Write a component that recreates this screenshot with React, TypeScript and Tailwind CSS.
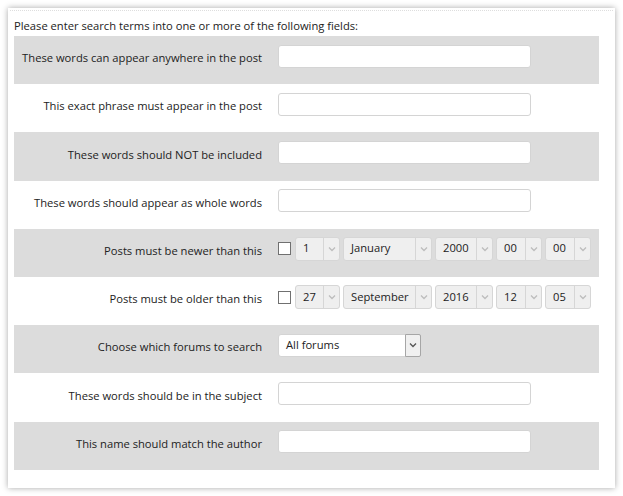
import React from 'react'

type Row = { label: string; kind: 'text' | 'newer' | 'older' | 'forums' }

const ROWS: Row[] = [
  { label: 'These words can appear anywhere in the post', kind: 'text' },
  { label: 'This exact phrase must appear in the post', kind: 'text' },
  { label: 'These words should NOT be included', kind: 'text' },
  { label: 'These words should appear as whole words', kind: 'text' },
  { label: 'Posts must be newer than this', kind: 'newer' },
  { label: 'Posts must be older than this', kind: 'older' },
  { label: 'Choose which forums to search', kind: 'forums' },
  { label: 'These words should be in the subject', kind: 'text' },
  { label: 'This name should match the author', kind: 'text' },
]

function Chevron({ className }: { className: string }) {
  return (
    <svg width="8" height="6" viewBox="0 0 8 6" className={className}>
      <path d="M1 1.5 L4 4.5 L7 1.5" fill="none" stroke="currentColor" strokeWidth="1.3" />
    </svg>
  )
}

function DateSelect({ value, w }: { value: string; w: string }) {
  return (
    <div className={`${w} h-[24px] flex items-stretch rounded-[3px] border border-[#d6d6d6] bg-[#efefef]`}>
      <div className="flex-1 flex items-center pl-[7px] text-[#222]">{value}</div>
      <div className="w-[16px] flex items-center justify-center border-l border-[#d6d6d6]">
        <Chevron className="text-[#bdbdbd]" />
      </div>
    </div>
  )
}

function DateFields({ vals }: { vals: string[] }) {
  return (
    <div className="flex items-center">
      <div className="w-[13px] h-[13px] border border-[#707070] bg-white mr-[4px]" />
      <div className="flex gap-[3px]">
        <DateSelect value={vals[0]} w="w-[45px]" />
        <DateSelect value={vals[1]} w="w-[89px]" />
        <DateSelect value={vals[2]} w="w-[58px]" />
        <DateSelect value={vals[3]} w="w-[46px]" />
        <DateSelect value={vals[4]} w="w-[46px]" />
      </div>
    </div>
  )
}

export default function App() {
  return (
    <div className="bg-white min-h-[496px] p-[8px]" style={{ fontFamily: '"Open Sans", "Liberation Sans", sans-serif' }}>
      <div className="w-[607px] h-[480px] bg-white shadow-[0_0_6px_rgba(0,0,0,0.35)] pt-[2px] pl-[6px] pr-[16px] text-[11.2px] text-[#333]">
        <div className="ml-[-4px] mr-[-14px] border-t border-dotted border-[#dedede]" />
        <div className="h-[25px] flex items-end pb-[1px] text-[#222]">
          Please enter search terms into one or more of the following fields:
        </div>
        <div className="flex flex-col">
          {ROWS.map((r, i) => (
            <div key={i} className={`h-[48.2px] pb-[8px] flex items-center ${i % 2 === 0 ? 'bg-[#dcdcdc]' : 'bg-white'}`}>
              <div className="w-[248px] pt-[5px] text-right text-[#222]">{r.label}</div>
              <div className="ml-[16px]">
                {r.kind === 'text' && (
                  <div className="w-[253px] h-[23px] bg-white border border-[#d4d4d4] rounded-[3px]" />
                )}
                {r.kind === 'newer' && <DateFields vals={['1', 'January', '2000', '00', '00']} />}
                {r.kind === 'older' && <DateFields vals={['27', 'September', '2016', '12', '05']} />}
                {r.kind === 'forums' && (
                  <div className="w-[143px] h-[23px] flex items-stretch bg-white border border-[#d4d4d4] rounded-[3px]">
                    <div className="flex-1 flex items-center pl-[7px] text-[#222]">All forums</div>
                    <div className="w-[16px] flex items-center justify-center border border-[#a6a6a6] bg-[#f0f0f0] -my-px -mr-px rounded-r-[2px]">
                      <Chevron className="text-[#555]" />
                    </div>
                  </div>
                )}
              </div>
            </div>
          ))}
        </div>
      </div>
    </div>
  )
}
